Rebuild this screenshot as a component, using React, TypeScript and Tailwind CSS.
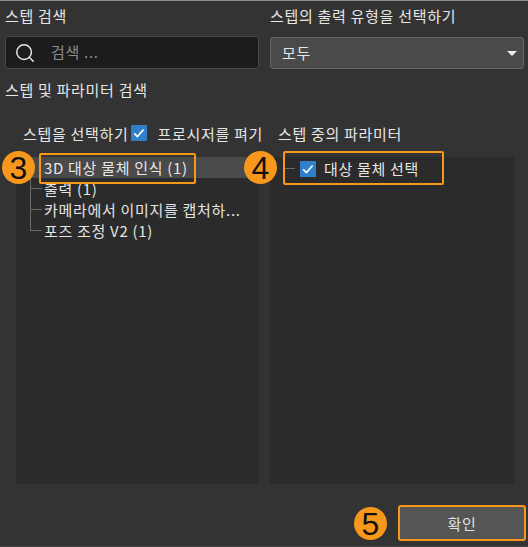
import { Search } from 'lucide-react';

const KR = { fontFamily: '"Noto Sans CJK KR", "Liberation Sans", sans-serif' };

const Badge = ({ n, className }: { n: string; className: string }) => (
  <div
    className={`absolute flex h-[33px] w-[33px] items-center justify-center rounded-full bg-[#f7981d] text-[32px] leading-none tracking-normal text-[#111] ${className}`}
    style={{ fontFamily: '"Liberation Sans", sans-serif' }}
  >
    {n}
  </div>
);

const Check = ({ className }: { className: string }) => (
  <span className={`flex h-[16px] w-[16px] shrink-0 items-center justify-center rounded-[1px] bg-[#2f7fc9] ${className}`}>
    <svg viewBox="0 0 16 16" className="h-[16px] w-[16px]" fill="none" stroke="#fff" strokeWidth="1.7">
      <path d="M3.2 8.3l3.2 3.2 6.2-7" />
    </svg>
  </span>
);

const TreeRow = ({ label, last }: { label: string; last?: boolean }) => (
  <div className="relative flex h-[21px] items-center pl-[28px] leading-none text-[#e4e4e4]">
    <span className={`absolute left-[14px] top-0 w-px bg-[#6a6a6a] ${last ? 'h-[11px]' : 'h-[21px]'}`} />
    <span className="absolute left-[14px] top-[10px] h-px w-[12px] bg-[#6a6a6a]" />
    {label}
  </div>
);

export default function App() {
  return (
    <div className="relative h-[547px] w-[528px] overflow-hidden border-t border-b border-t-[#8a8a8a] border-b-[#454545] bg-[#333333] text-[15px] tracking-[0.7px] text-[#e6e6e6]" style={KR}>
      <div className="grid grid-cols-[254px_254px] gap-x-[11px] pl-[5px] pt-[4px]">
        <div>
          <div className="flex h-[20px] items-center leading-none">스텝 검색</div>
          <div className="mt-[11px] flex h-[33px] items-center rounded-[3px] border border-[#4a4a4a] bg-[#1c1c1c] pl-[8px]">
            <Search className="h-[22px] w-[22px] text-[#e8e8e8]" strokeWidth={1.6} />
            <span className="ml-[15px] text-[#8c8c8c]">검색 ...</span>
          </div>
          <div className="mt-[10px] flex h-[20px] items-center leading-none">스텝 및 파라미터 검색</div>
        </div>
        <div>
          <div className="flex h-[20px] items-center leading-none">스텝의 출력 유형을 선택하기</div>
          <div className="mt-[12px] flex h-[32px] items-center justify-between rounded-[3px] border border-[#666666] bg-[#4a4a4a] pl-[11px] pr-[6px]">
            <span>모두</span>
            <span className="h-0 w-0 border-x-[5px] border-t-[5px] border-x-transparent border-t-[#eeeeee]" />
          </div>
        </div>
      </div>

      <div className="mt-[23px] grid grid-cols-[243px_244px] gap-x-[11px] pl-[16px]">
        <div>
          <div className="flex h-[22px] items-center leading-none">
            <span className="whitespace-nowrap pl-[7px]">스텝을 선택하기</span>
            <Check className="ml-[2px]" />
            <span className="ml-[11px] whitespace-nowrap">프로시저를 펴기</span>
          </div>
          <div className="mt-[13px] h-[327px] bg-[#2b2b2b]">
            <div className="flex h-[21px] items-center bg-[#4a4a4a] pl-[28px] leading-none text-[#e8e8e8]">3D 대상 물체 인식 (1)</div>
            <TreeRow label="출력 (1)" />
            <TreeRow label="카메라에서 이미지를 캡처하..." />
            <TreeRow label="포즈 조정 V2 (1)" last />
          </div>
        </div>
        <div>
          <div className="flex h-[22px] items-center pl-[8px] leading-none">스텝 중의 파라미터</div>
          <div className="mt-[13px] h-[327px] bg-[#2b2b2b] pt-[1px]">
            <div className="flex h-[21px] items-center pl-[30px] leading-none">
              <Check className="" />
              <span className="ml-[8px]">대상 물체 선택</span>
            </div>
          </div>
        </div>
      </div>

      <div className="mr-[2px] mt-[21px] flex justify-end">
        <div className="flex h-[36px] w-[128px] items-center justify-center rounded-[3px] border-2 border-[#f7981d] bg-[#555555] leading-none text-[#e0e0e0]">확인</div>
      </div>

      <Badge n="3" className="left-[2px] top-[150px]" />
      <Badge n="4" className="left-[244px] top-[150px]" />
      <Badge n="5" className="left-[354px] top-[506px]" />
      <div className="absolute left-[39px] top-[152px] h-[31px] w-[157px] rounded-[2px] border-2 border-[#f7981d]" />
      <div className="absolute left-[283px] top-[150px] h-[34px] w-[161px] rounded-[2px] border-2 border-[#f7981d]" />
      <div className="absolute left-[285px] top-[167px] h-[1px] w-[10px] bg-[#6a6a6a]" />
    </div>
  );
}
